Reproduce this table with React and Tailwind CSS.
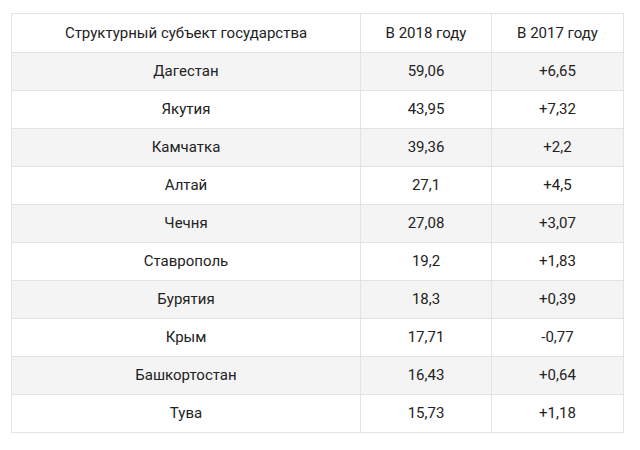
import React from 'react';

const rows = [
  ['Дагестан', '59,06', '+6,65'],
  ['Якутия', '43,95', '+7,32'],
  ['Камчатка', '39,36', '+2,2'],
  ['Алтай', '27,1', '+4,5'],
  ['Чечня', '27,08', '+3,07'],
  ['Ставрополь', '19,2', '+1,83'],
  ['Бурятия', '18,3', '+0,39'],
  ['Крым', '17,71', '-0,77'],
  ['Башкортостан', '16,43', '+0,64'],
  ['Тува', '15,73', '+1,18'],
];

export default function App() {
  return (
    <div className="w-[640px] h-[450px] bg-white pt-[13px] pl-[11px] font-['Roboto',sans-serif] text-[15px] text-[#222]">
      <table className="border-collapse w-[612px] table-fixed">
        <colgroup>
          <col className="w-[349px]" />
          <col className="w-[131px]" />
          <col className="w-[132px]" />
        </colgroup>
        <thead>
          <tr className="h-[39px]">
            <th className="border border-[#e3e3e3] font-normal text-center">Структурный субъект государства</th>
            <th className="border border-[#e3e3e3] font-normal text-center">В 2018 году</th>
            <th className="border border-[#e3e3e3] font-normal text-center">В 2017 году</th>
          </tr>
        </thead>
        <tbody>
          {rows.map((r, i) => (
            <tr key={r[0]} className={i % 2 === 0 ? 'h-[38px] bg-[#f4f4f4]' : 'h-[38px] bg-white'}>
              {r.map((c, j) => (
                <td key={j} className="border border-[#e3e3e3] text-center">{c}</td>
              ))}
            </tr>
          ))}
        </tbody>
      </table>
    </div>
  );
}
